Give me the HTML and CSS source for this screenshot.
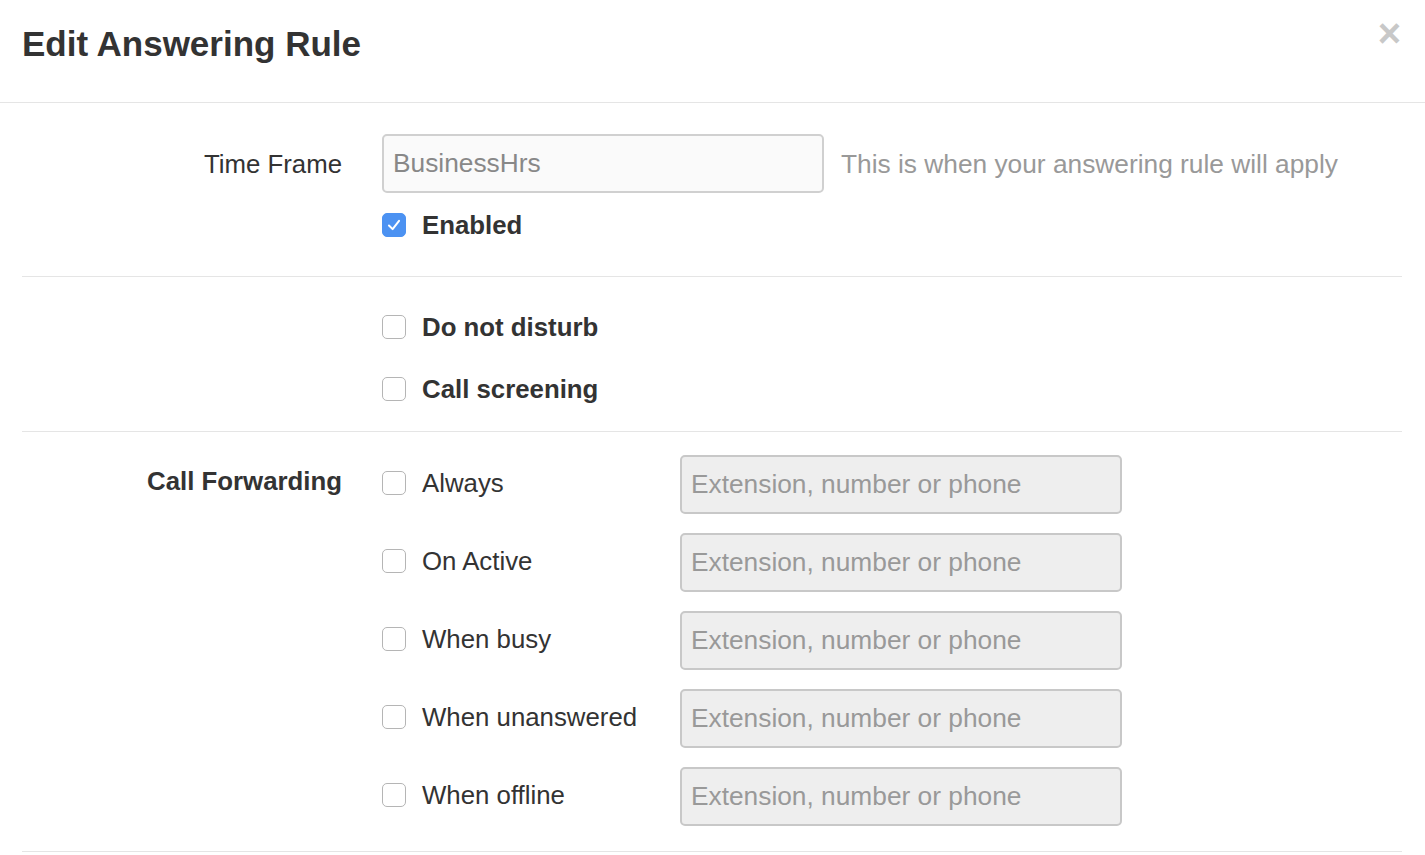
FILE: index.html
```html
<!DOCTYPE html>
<html>
<head>
<meta charset="utf-8">
<link rel="stylesheet" href="styles.css">
</head>
<body>
<div class="modal">
  <div class="modal-header">
    <h1 class="title">Edit Answering Rule</h1>
    <span class="close">&times;</span>
  </div>
  <div class="modal-body">
    <div class="section section-time">
      <div class="row">
        <div class="label">Time Frame</div>
        <div class="field">
          <div class="input input-light">BusinessHrs</div>
        </div>
        <div class="help">This is when your answering rule will apply</div>
      </div>
      <div class="row row-check">
        <div class="label"></div>
        <label class="check bold">
          <span class="box checked"><svg viewBox="0 0 24 24" width="24" height="24"><path d="M6.5 12.5 L10.5 16.5 L17.5 7.5" fill="none" stroke="#fff" stroke-width="2.2" stroke-linecap="round" stroke-linejoin="round"/></svg></span>
          Enabled
        </label>
      </div>
    </div>
    <div class="section section-dnd">
      <div class="row row-check">
        <div class="label"></div>
        <label class="check bold"><span class="box"></span>Do not disturb</label>
      </div>
      <div class="row row-check">
        <div class="label"></div>
        <label class="check bold"><span class="box"></span>Call screening</label>
      </div>
    </div>
    <div class="section section-fwd">
      <div class="row fwd-row">
        <div class="label bold">Call Forwarding</div>
        <label class="check fwd-check"><span class="box"></span>Always</label>
        <div class="input input-dis">Extension, number or phone</div>
      </div>
      <div class="row fwd-row">
        <div class="label"></div>
        <label class="check fwd-check"><span class="box"></span>On Active</label>
        <div class="input input-dis">Extension, number or phone</div>
      </div>
      <div class="row fwd-row">
        <div class="label"></div>
        <label class="check fwd-check"><span class="box"></span>When busy</label>
        <div class="input input-dis">Extension, number or phone</div>
      </div>
      <div class="row fwd-row">
        <div class="label"></div>
        <label class="check fwd-check"><span class="box"></span>When unanswered</label>
        <div class="input input-dis">Extension, number or phone</div>
      </div>
      <div class="row fwd-row">
        <div class="label"></div>
        <label class="check fwd-check"><span class="box"></span>When offline</label>
        <div class="input input-dis">Extension, number or phone</div>
      </div>
    </div>
  </div>
</div>
</body>
</html>
```
FILE: styles.css
```css
* { box-sizing: border-box; }
html, body { margin: 0; padding: 0; background: #fff; }
body {
  font-family: "Liberation Sans", Arial, Helvetica, sans-serif;
  color: #333;
  font-size: 25.8px;
  width: 1425px;
  height: 855px;
  overflow: hidden;
}
.modal { width: 1425px; }
.modal-header {
  height: 103px;
  border-bottom: 1px solid #e5e5e5;
  display: flex;
  align-items: flex-start;
  justify-content: space-between;
  padding: 0 24px 0 22px;
}
.title {
  margin: 0;
  padding-top: 24px;
  font-size: 35px;
  line-height: 40px;
  font-weight: bold;
  color: #333;
}
.close {
  font-size: 40px;
  line-height: 40px;
  font-weight: bold;
  color: #c8c8c8;
  margin-top: 13px;
}
.modal-body { padding: 0 23px 0 22px; }
.section { border-bottom: 1px solid #e5e5e5; }
.section-time { padding: 31px 0 28px; height: 174px; }
.section-dnd { padding: 35px 0 0; height: 155px; }
.section-fwd { padding: 23px 0 0; height: 420px; }
.row { display: flex; align-items: center; }
.label {
  width: 320px;
  flex: none;
  text-align: right;
  margin-right: 40px;
  line-height: 30px;
}
.bold { font-weight: bold; }
.field { flex: none; }
.input {
  width: 442px;
  height: 59px;
  border: 2px solid #ccc;
  border-radius: 5px;
  padding: 0 9px;
  line-height: 54px;
  font-size: 26.3px;
  color: #999;
  flex: none;
}
.input-light { background: #fafafa; color: #888; border-color: #d0d0d0; }
.input-dis { background: #eee; border-color: #c8c8c8; }
.help {
  margin-left: 17px;
  color: #999;
  font-size: 26.3px;
  line-height: 30px;
}
.section-time .row:first-child { height: 59px; }
.row-check { height: 30px; }
.section-time .row-check { margin-top: 17px; }
.section-dnd .row-check + .row-check { margin-top: 32px; }
.check {
  display: flex;
  align-items: center;
  line-height: 30px;
}
.box {
  width: 24px;
  height: 24px;
  border: 1.5px solid #b5b5b5;
  border-radius: 5px;
  background: #fff;
  margin-right: 16px;
  flex: none;
  display: flex;
  align-items: center;
  justify-content: center;
}
.box.checked {
  background: #4c92f2;
  border-color: #4c92f2;
}
.box svg { display: block; }
.fwd-row { height: 59px; margin-bottom: 19px; }
.fwd-check { width: 298px; flex: none; margin-top: -3px; }
.fwd-row:first-child .label { align-self: flex-start; margin-top: 11px; }
```
